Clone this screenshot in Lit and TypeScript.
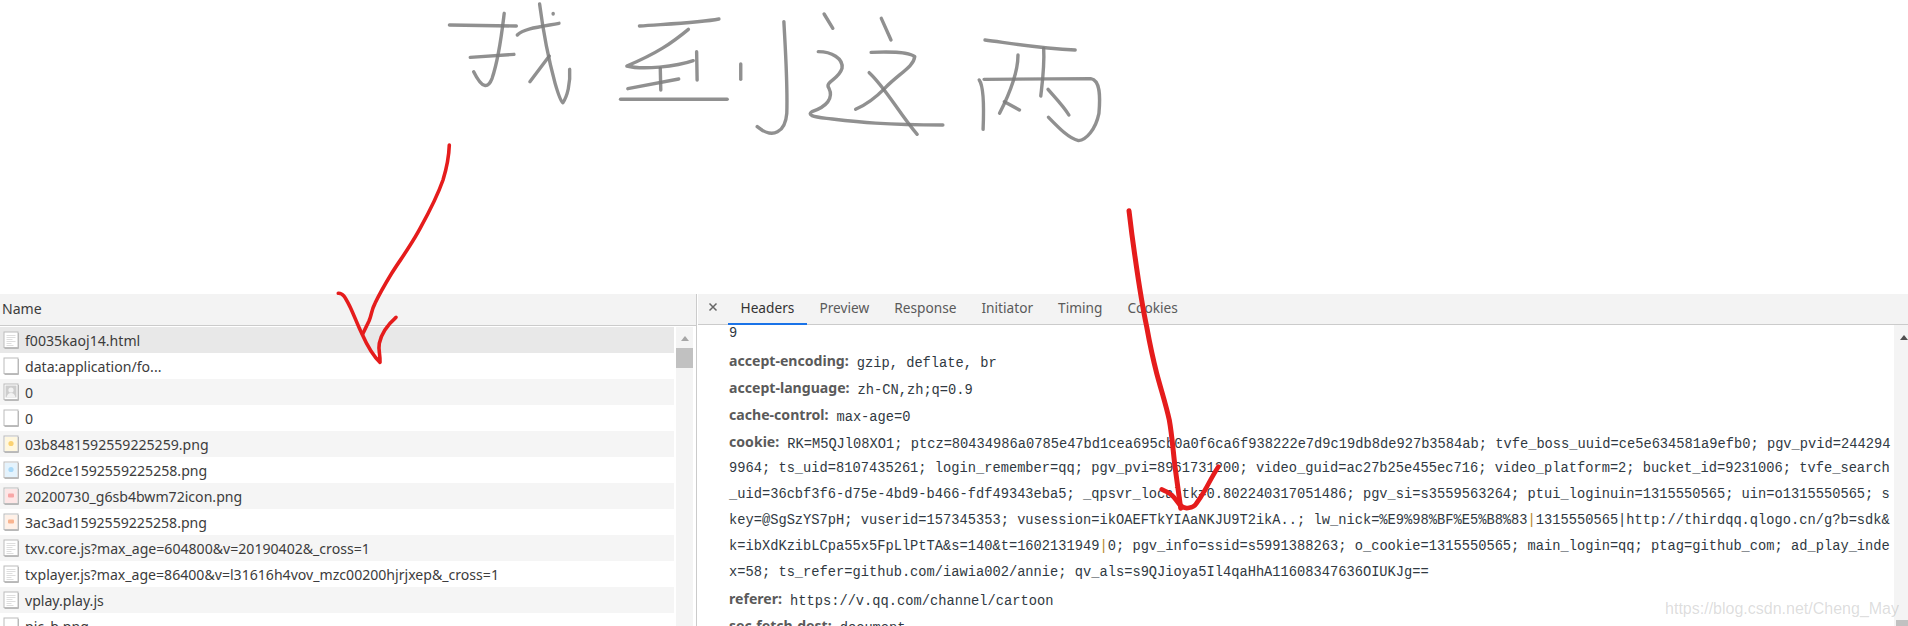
import { LitElement, html, css, svg } from "lit";
import { customElement } from "lit/decorators.js";

type Kind = "doc" | "blank" | "person" | "yellow" | "blue" | "pink" | "peach";

const ROWS: [string, Kind][] = [
  ["f0035kaoj14.html", "doc"],
  ["data:application/fo...", "blank"],
  ["0", "person"],
  ["0", "blank"],
  ["03b8481592559225259.png", "yellow"],
  ["36d2ce1592559225258.png", "blue"],
  ["20200730_g6sb4bwm72icon.png", "pink"],
  ["3ac3ad1592559225258.png", "peach"],
  ["txv.core.js?max_age=604800&v=20190402&_cross=1", "doc"],
  ["txplayer.js?max_age=86400&v=l31616h4vov_mzc00200hjrjxep&_cross=1", "doc"],
  ["vplay.play.js", "doc"],
  ["pic_b.png", "blank"],
];

const TABS = ["Headers", "Preview", "Response", "Initiator", "Timing", "Cookies"];

const INK = [
  "M102 75 L240 78",
  "M215 40 C210 100 205 170 190 235 C182 265 170 268 152 215",
  "M145 172 L235 163",
  "M288 12 C295 90 305 170 320 250 C328 290 332 305 336 308 C345 290 352 250 350 208",
  "M242 105 C255 85 290 80 328 70",
  "M308 168 L268 245",
  "M316 40 L316 42",
  "M494 78 C550 72 620 68 658 57",
  "M595 88 C560 130 530 160 468 198 C500 210 570 200 605 182",
  "M612 155 L613 240",
  "M470 266 L575 237",
  "M537 205 L538 270",
  "M455 298 L675 298",
  "M703 192 L703 238",
  "M792 65 C795 150 800 250 798 340 C795 395 770 420 737 380",
  "M875 42 L893 85",
  "M993 55 L1013 120",
  "M863 155 C890 155 915 175 912 205 C905 240 875 245 885 265 C895 295 880 320 850 335 C840 345 850 350 880 355 C940 365 990 375 1120 375",
  "M972 157 C1000 155 1050 155 1062 170 C1060 200 1030 220 1000 265 C980 295 960 315 940 328",
  "M968 218 C1000 260 1030 340 1067 403",
  "M1207 120 C1260 130 1320 145 1393 150",
  "M1328 145 C1330 200 1325 250 1322 288",
  "M1275 165 C1275 210 1265 260 1237 340",
  "M1247 305 L1278 330",
  "M1195 240 C1205 260 1205 320 1203 388",
  "M1205 238 L1425 236 C1445 240 1445 290 1442 340 C1435 390 1415 420 1400 422 C1380 415 1360 385 1338 352",
  "M1337 268 C1350 290 1370 320 1380 345",
];

const TINT: Record<string, [string, string]> = {
  yellow: ["#fff7de", "#fbd271"],
  blue: ["#e4f3fd", "#a9d9f8"],
  pink: ["#fde6e6", "#f8a6a6"],
  peach: ["#fff1e8", "#f8b490"],
};

function fileIcon(kind: Kind) {
  let inner = svg``;
  if (kind === "doc") {
    inner = svg`<path d="M3.5 4.5h9M3.5 6.5h9M3.5 8.5h6M3.5 10.5h9M3.5 12.5h5M3.5 14.5h7" stroke="#dedede" stroke-width="1" fill="none"/>`;
  } else if (kind === "person") {
    inner = svg`<rect x="2.5" y="2.5" width="11" height="12" fill="#cdcdcd"/><circle cx="8" cy="7" r="2.6" fill="#f2f2f2"/><path d="M3.5 14.5c.6-3.4 2.4-4.6 4.5-4.6s3.9 1.2 4.5 4.6z" fill="#f2f2f2"/>`;
  } else if (kind !== "blank") {
    const [bg, fg] = TINT[kind];
    const mark =
      kind === "yellow" || kind === "blue"
        ? svg`<circle cx="8" cy="8.5" r="2.6" fill="${fg}"/>`
        : svg`<rect x="5" y="6.5" width="6" height="4" rx="1" fill="${fg}"/>`;
    inner = svg`<rect x="2" y="2" width="12" height="14" fill="${bg}"/>${mark}`;
  }
  return html`<svg class="file" viewBox="0 0 16 18" width="16" height="18">
    <rect x="1" y="1" width="14" height="15.5" fill="#fff" stroke="#bcbcbc" stroke-width="1"/>
    <path d="M1.5 17.5h14V2" stroke="#b8b8b8" fill="none"/>
    ${inner}
  </svg>`;
}

const P = html`<span class="pipe">|</span>`;

@customElement("app-root")
export class AppRoot extends LitElement {
  static styles = css`
    :host {
      display: block;
      position: relative;
      width: 1908px;
      height: 626px;
      overflow: hidden;
      background: #fff;
      color: #3c3c3c;
      font-family: "Noto Sans", sans-serif;
      font-size: 14.1px;
    }
    .top {
      height: 294px;
    }
    .panel {
      display: flex;
      height: 332px;
      overflow: hidden;
    }
    .left {
      flex: 0 0 696px;
      border-right: 1px solid #cbcbcb;
      display: flex;
      flex-direction: column;
      min-width: 0;
    }
    .name-head {
      flex: 0 0 29px;
      padding: 0 0 2px 2px;
      border-bottom: 1px solid #cbcbcb;
      background: #f3f3f3;
      display: flex;
      align-items: center;
    }
    .list {
      display: flex;
      flex: 1;
      min-height: 0;
      padding-top: 1px;
    }
    .rows {
      flex: 0 0 674px;
      overflow: hidden;
    }
    .row {
      height: 26px;
      display: flex;
      align-items: center;
      gap: 6px;
      padding-left: 3px;
      white-space: nowrap;
    }
    .row:nth-child(odd) {
      background: #f5f5f5;
    }
    .row.sel {
      background: #e8e8e8;
    }
    .file {
      flex: none;
    }
    .vbar {
      position: relative;
      background: #f4f4f4;
    }
    .vbar.lbar {
      flex: 0 0 17px;
      margin-left: 2px;
      margin-right: 3px;
    }
    .vbar.rbar {
      flex: 0 0 14px;
    }
    .up {
      position: absolute;
      left: 50%;
      top: 9px;
      margin-left: -4px;
      width: 0;
      height: 0;
      border-left: 4.5px solid transparent;
      border-right: 4.5px solid transparent;
      border-bottom: 5px solid #a6a6a6;
    }
    .rbar .up {
      top: 10px;
      margin-left: -1px;
      border-bottom-color: #505050;
    }
    .thumb {
      position: absolute;
      background: #c1c1c1;
    }
    .lbar .thumb {
      left: 0;
      right: 0;
      top: 21px;
      height: 20px;
    }
    .rbar .thumb {
      left: 2px;
      right: 0;
      top: 295px;
      height: 20px;
    }
    .right {
      flex: 1;
      min-width: 0;
      display: flex;
      flex-direction: column;
      margin-left: 1px;
    }
    .tabs {
      flex: 0 0 30px;
      display: flex;
      align-items: stretch;
      background: #f3f3f3;
      border-bottom: 1px solid #cbcbcb;
      color: #5a5a5a;
      font-size: 13.7px;
    }
    .close {
      flex: 0 0 30px;
      display: flex;
      align-items: center;
      justify-content: center;
      padding-bottom: 5px;
    }
    .tab {
      padding: 0 12.5px 3px;
      display: flex;
      align-items: center;
      margin-bottom: -1px;
      border-bottom: 2px solid transparent;
    }
    .tab.on {
      color: #333;
      border-bottom-color: #1a73e8;
    }
    .detail {
      flex: 1;
      min-height: 0;
      display: flex;
    }
    .body {
      flex: 1;
      min-width: 0;
      overflow: hidden;
      padding-left: 31px;
    }
    .lines {
      margin-top: -4px;
    }
    .line {
      height: 26px;
      line-height: 26px;
      white-space: pre;
      font-family: "Liberation Mono", monospace;
      font-size: 13.73px;
      color: #303942;
    }
    .line.first {
      margin-top: 2px;
    }
    .line.head {
      margin-top: 1px;
    }
    .key {
      font-family: "Noto Sans", sans-serif;
      font-size: 14.1px;
      font-weight: 700;
      color: #5a5a5a;
      margin-right: 8px;
      position: relative;
      top: -1px;
    }
    .pipe {
      color: #b5842a;
    }
    .ink {
      position: absolute;
      left: 0;
      top: 0;
      pointer-events: none;
    }
    .pencil {
      filter: blur(0.7px);
    }
    .mark {
      position: absolute;
      right: 9px;
      bottom: 8px;
      font-family: "Liberation Sans", sans-serif;
      font-size: 16px;
      color: rgba(150, 150, 150, 0.32);
      white-space: nowrap;
      pointer-events: none;
    }
  `;

  render() {
    return html`
      <div class="top"></div>
      <div class="panel">
        <div class="left">
          <div class="name-head">Name</div>
          <div class="list">
            <div class="rows">
              ${ROWS.map(
                ([n, k], i) => html`<div class="row ${i === 0 ? "sel" : ""}">
                  ${fileIcon(k)}<span>${n}</span>
                </div>`
              )}
            </div>
            <div class="vbar lbar"><div class="up"></div><div class="thumb"></div></div>
          </div>
        </div>
        <div class="right">
          <div class="tabs">
            <div class="close">
              <svg width="10" height="10" viewBox="0 0 10 10">
                <path d="M1.5 1.5l7 7M8.5 1.5l-7 7" stroke="#666" stroke-width="1.5" fill="none" />
              </svg>
            </div>
            ${TABS.map((t, i) => html`<div class="tab ${i === 0 ? "on" : ""}">${t}</div>`)}
          </div>
          <div class="detail">
            <div class="body">
              <div class="lines">
                <div class="line">9</div>
                <div class="line first"><span class="key">accept-encoding:</span>gzip, deflate, br</div>
                <div class="line head"><span class="key">accept-language:</span>zh-CN,zh;q=0.9</div>
                <div class="line head"><span class="key">cache-control:</span>max-age=0</div>
                <div class="line head"><span class="key">cookie:</span>RK=M5QJl08XO1; ptcz=80434986a0785e47bd1cea695cb0a0f6ca6f938222e7d9c19db8de927b3584ab; tvfe_boss_uuid=ce5e634581a9efb0; pgv_pvid=244294</div>
                <div class="line">9964; ts_uid=8107435261; login_remember=qq; pgv_pvi=8961731200; video_guid=ac27b25e455ec716; video_platform=2; bucket_id=9231006; tvfe_search</div>
                <div class="line">_uid=36cbf3f6-d75e-4bd9-b466-fdf49343eba5; _qpsvr_localtk=0.802240317051486; pgv_si=s3559563264; ptui_loginuin=1315550565; uin=o1315550565; s</div>
                <div class="line">key=@SgSzYS7pH; vuserid=157345353; vusession=ikOAEFTkYIAaNKJU9T2ikA..; lw_nick=%E9%98%BF%E5%B8%83${P}1315550565|http://thirdqq.qlogo.cn/g?b=sdk&</div>
                <div class="line">k=ibXdKzibLCpa55x5FpLlPtTA&s=140&t=1602131949${P}0; pgv_info=ssid=s5991388263; o_cookie=1315550565; main_login=qq; ptag=github_com; ad_play_inde</div>
                <div class="line">x=58; ts_refer=github.com/iawia002/annie; qv_als=s9QJioya5Il4qaHhA11608347636OIUKJg==</div>
                <div class="line head"><span class="key">referer:</span>https://v.qq.com/channel/cartoon</div>
                <div class="line head"><span class="key">sec-fetch-dest:</span>document</div>
              </div>
            </div>
            <div class="vbar rbar"><div class="up"></div><div class="thumb"></div></div>
          </div>
        </div>
      </div>
      <svg class="ink" width="1908" height="626" viewBox="0 0 1908 626">
        <title>找到这两</title>
        <g class="pencil" transform="translate(400 0) scale(0.4847 0.3333)" fill="none" stroke="#7c7c7c" stroke-opacity="0.85" stroke-linecap="round" stroke-linejoin="round">
          ${INK.map((d) => svg`<path d=${d} stroke-width="3.4" vector-effect="non-scaling-stroke"/>`)}
        </g>
        <g fill="none" stroke="#e51c1c" stroke-linecap="round" stroke-linejoin="round">
          <path stroke-width="3.6" d="M449.3 145C449 155 447 167 443 180C436 200 428 214 418.3 231.7C408 250 400 260 391.7 273.3C384 286 379 295 375 303.3C371 311 372 314 369 321L362.7 334" />
          <path stroke-width="3.6" d="M338.3 293.3C343 293 345 297 350 306.7C354 315 358 326 361.7 333.3C366 343 372 355 380 362.3C380.5 355 378 350 379.3 343.3C381 335 385 327 396 317.3" />
          <path stroke-width="5" d="M1129 210.7C1131 228 1133 243 1135 256.7C1139 285 1142 305 1146.7 326.7C1150 345 1152 355 1156.7 373.3C1162 393 1166 405 1169.3 420C1172 435 1173 450 1175 466.7C1177 482 1179 495 1180.7 508.3" />
          <path stroke-width="4.6" d="M1161.7 489.3C1166 491 1169 493 1171.7 495C1175 498 1177 502 1180 505C1183 508 1185 508.5 1188 508C1192 507.5 1194 507 1196 504C1199 500 1201 497 1205 490C1210 481 1213 475 1218.3 466.7" />
        </g>
      </svg>
      <div class="mark">https://blog.csdn.net/Cheng_May</div>
    `;
  }
}
